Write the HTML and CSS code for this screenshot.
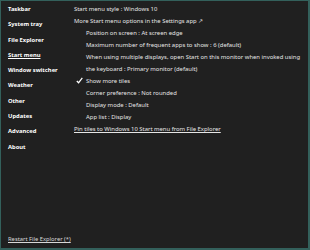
FILE: index.html
```html
<!DOCTYPE html>
<html lang="en">
<head>
    <meta charset="UTF-8">
    <title>Properties</title>
    <link rel="stylesheet" href="styles.css">
</head>
<body>
    <div class="window">
        <div class="side">
            <div class="nav">
                <a class="nav-item">Taskbar</a>
                <a class="nav-item">System tray</a>
                <a class="nav-item">File Explorer</a>
                <a class="nav-item active">Start menu</a>
                <a class="nav-item">Window switcher</a>
                <a class="nav-item">Weather</a>
                <a class="nav-item">Other</a>
                <a class="nav-item">Updates</a>
                <a class="nav-item">Advanced</a>
                <a class="nav-item">About</a>
            </div>
            <a class="restart">Restart File Explorer (*)</a>
        </div>
        <div class="main">
            <div class="row">Start menu style : Windows 10</div>
            <div class="row">More Start menu options in the Settings app &#8599;</div>
            <div class="row sub">Position on screen : At screen edge</div>
            <div class="row sub">Maximum number of frequent apps to show : 6 (default)</div>
            <div class="row sub">When using multiple displays, open Start on this monitor when invoked using<br>the keyboard : Primary monitor (default)</div>
            <div class="row sub check">
                <svg class="tick" width="7" height="7" viewBox="0 0 7 7">
                    <path d="M0.8 4 L2.6 5.8 L6.3 0.8" fill="none" stroke="#fff" stroke-width="1.3"/>
                </svg>
                Show more tiles
            </div>
            <div class="row sub">Corner preference : Not rounded</div>
            <div class="row sub">Display mode : Default</div>
            <div class="row sub">App list : Display</div>
            <div class="row link">Pin tiles to Windows 10 Start menu from File Explorer</div>
        </div>
    </div>
</body>
</html>
```

FILE: styles.css
```css
*{
    margin: 0;
    padding: 0;
    box-sizing: border-box;
}
body{
    background-color: #202020;
    font-family: "Noto Sans", sans-serif;
    color: #e6e6e6;
}
.window{
    width: 310px;
    height: 250px;
    display: flex;
    background-color: #202020;
    border: 1px solid #33605b;
    border-right-width: 2px;
    border-bottom-width: 2px;
}
.side{
    width: 72px;
    display: flex;
    flex-direction: column;
    justify-content: space-between;
    padding: 1px 0 4px 7px;
}
.nav{
    display: flex;
    flex-direction: column;
}
.nav-item{
    font-size: 5.8px;
    font-weight: bold;
    line-height: 15.3px;
    color: #ffffff;
}
.nav-item.active{
    text-decoration: underline;
}
.restart{
    font-size: 5.8px;
    line-height: 10px;
    color: #d8d8d8;
    text-decoration: underline;
    white-space: nowrap;
}
.main{
    flex: 1;
    padding: 2px 0 0 1px;
}
.row{
    font-size: 5.9px;
    line-height: 12px;
    white-space: nowrap;
}
.sub{
    padding-left: 12px;
}
.check{
    position: relative;
}
.tick{
    position: absolute;
    left: 2px;
    top: 2px;
}
.link{
    text-decoration: underline;
}
```
